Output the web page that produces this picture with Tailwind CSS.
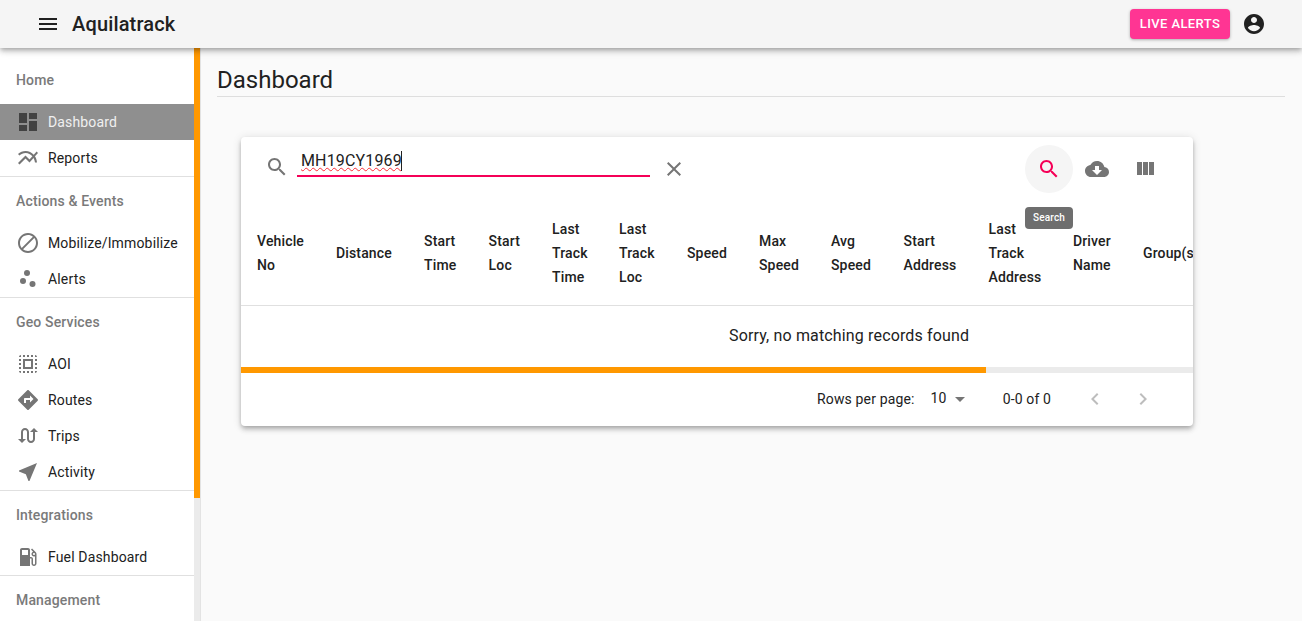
<!DOCTYPE html>
<html lang="en">
<head>
<meta charset="utf-8">
<title>Aquilatrack</title>
<script src="https://cdn.jsdelivr.net/npm/@tailwindcss/browser@4"></script>
</head>
<body class="h-[621px] w-[1302px] overflow-hidden bg-[#fafafa] font-['Roboto',sans-serif] tracking-[0.15px] text-[#212121]">
<header class="relative z-20 flex h-12 items-center bg-[#f5f5f5] pr-9 pl-6 shadow-[0_2px_4px_-1px_rgba(0,0,0,0.2),0_4px_5px_0_rgba(0,0,0,0.14),0_1px_10px_0_rgba(0,0,0,0.12)]">
  <svg class="ml-3 size-6 fill-[#212121]" viewBox="0 0 24 24"><path d="M3 18h18v-2H3v2zm0-5h18v-2H3v2zm0-7v2h18V6H3z"/></svg>
  <h1 class="ml-3 text-xl leading-8 font-medium">Aquilatrack</h1>
  <button class="mr-3 ml-auto h-[30px] w-[100px] rounded bg-[#ff3593] text-[13px] font-medium tracking-[0.4px] text-white uppercase shadow-[0_1px_3px_rgba(0,0,0,0.3)]">Live Alerts</button>
  <svg class="size-6 fill-[#212121]" viewBox="0 0 24 24"><path d="M12 2C6.48 2 2 6.48 2 12s4.48 10 10 10 10-4.48 10-10S17.52 2 12 2zm0 3c1.66 0 3 1.34 3 3s-1.34 3-3 3-3-1.34-3-3 1.34-3 3-3zm0 14.2c-2.5 0-4.71-1.28-6-3.22.03-1.99 4-3.08 6-3.08 1.99 0 5.97 1.09 6 3.08-1.29 1.94-3.5 3.22-6 3.22z"/></svg>
</header>
<div class="flex h-[573px]">
  <aside class="relative flex w-[201px] shrink-0 overflow-hidden border-r border-[#e3e3e3] bg-white">
    <nav class="w-[194px] shrink-0 pt-2 text-sm">
      <div class="flex h-12 items-center pl-4 font-medium text-[#7a7a7a]">Home</div>
      <a class="flex h-9 items-center bg-[#8f8f8f] pl-4 text-[#f0f0f0]"><svg class="mr-2 size-6 fill-[#424242]" viewBox="0 0 24 24"><path d="M3 13h8V3H3v10zm0 8h8v-6H3v6zm10 0h8V11h-8v10zm0-18v6h8V3h-8z"/></svg>Dashboard</a>
      <a class="flex h-9 items-center pl-4"><svg class="mr-2 size-6 fill-[#757575]" viewBox="0 0 24 24"><path d="M22 6.92l-1.41-1.41-2.85 3.21C15.68 6.4 12.83 5 9.61 5 6.72 5 4.07 6.16 2 8l1.42 1.42C5.12 7.93 7.27 7 9.61 7c2.74 0 5.09 1.26 6.77 3.24l-2.88 3.24-4-4L2 16.99l1.5 1.5 6-6.01 4 4 4.05-4.55c.75 1.35 1.25 2.9 1.44 4.55H21c-.22-2.3-.95-4.39-2.04-6.14L22 6.92z"/></svg>Reports</a>
      <div class="h-px bg-[#e0e0e0]"></div>
      <div class="flex h-12 items-center pl-4 font-medium text-[#7a7a7a]">Actions &amp; Events</div>
      <a class="flex h-9 items-center pl-4"><svg class="mr-2 size-6 fill-[#757575]" viewBox="0 0 24 24"><path d="M12 2C6.48 2 2 6.48 2 12s4.48 10 10 10 10-4.48 10-10S17.52 2 12 2zM4 12c0-4.42 3.58-8 8-8 1.85 0 3.55.63 4.9 1.69L5.69 16.9C4.63 15.55 4 13.85 4 12zm8 8c-1.85 0-3.55-.63-4.9-1.69L18.31 7.1C19.37 8.45 20 10.15 20 12c0 4.42-3.58 8-8 8z"/></svg>Mobilize/Immobilize</a>
      <a class="flex h-9 items-center pl-4"><svg class="mr-2 size-6 fill-[#757575]" viewBox="0 0 24 24"><circle cx="11" cy="6" r="3"/><circle cx="7" cy="14" r="3"/><circle cx="16.500" cy="17" r="3"/></svg>Alerts</a>
      <div class="h-px bg-[#e0e0e0]"></div>
      <div class="flex h-12 items-center pl-4 font-medium text-[#7a7a7a]">Geo Services</div>
      <a class="flex h-9 items-center pl-4"><svg class="mr-2 size-6 fill-[#757575]" viewBox="0 0 24 24"><path d="M3 5h2V3c-1.100 0-2 .9-2 2zm0 8h2v-2H3v2zm4 8h2v-2H7v2zM3 9h2V7H3v2zm10-6h-2v2h2V3zm6 0v2h2c0-1.100-.9-2-2-2zM5 21v-2H3c0 1.100.9 2 2 2zm-2-4h2v-2H3v2zM9 3H7v2h2V3zm2 18h2v-2h-2v2zm8-8h2v-2h-2v2zm0 8c1.100 0 2-.9 2-2h-2v2zm0-12h2V7h-2v2zm0 8h2v-2h-2v2zm-4 4h2v-2h-2v2zm0-16h2V3h-2v2zM7 17h10V7H7v10zm2-8h6v6H9V9z"/></svg>AOI</a>
      <a class="flex h-9 items-center pl-4"><svg class="mr-2 size-6 fill-[#757575]" viewBox="0 0 24 24"><path d="M21.710 11.290l-9-9c-.39-.39-1.020-.39-1.410 0l-9 9c-.39.39-.39 1.020 0 1.410l9 9c.39.39 1.020.39 1.410 0l9-9c.39-.38.39-1.010 0-1.410zM14 14.500V12h-4v3H8v-4c0-.55.45-1 1-1h5V7.500l3.500 3.500-3.500 3.500z"/></svg>Routes</a>
      <a class="flex h-9 items-center pl-4"><svg class="mr-2 size-6 fill-[#757575]" viewBox="0 0 24 24"><path d="M18 4l-4 4h3v7c0 1.100-.9 2-2 2s-2-.9-2-2V8c0-2.210-1.790-4-4-4S5 5.790 5 8v7H2l4 4 4-4H7V8c0-1.100.9-2 2-2s2 .9 2 2v7c0 2.210 1.790 4 4 4s4-1.790 4-4V8h3l-4-4z"/></svg>Trips</a>
      <a class="flex h-9 items-center pl-4"><svg class="mr-2 size-6 fill-[#757575]" viewBox="0 0 24 24"><path d="M21 3L3 10.530v.98l6.840 2.650L12.480 21h.98L21 3z"/></svg>Activity</a>
      <div class="h-px bg-[#e0e0e0]"></div>
      <div class="flex h-12 items-center pl-4 font-medium text-[#7a7a7a]">Integrations</div>
      <a class="flex h-9 items-center pl-4"><svg class="mr-2 size-6 fill-[#757575]" viewBox="0 0 24 24"><path d="M19.770 7.230l.01-.01-3.720-3.720L15 4.560l2.110 2.110c-.94.36-1.610 1.260-1.610 2.330 0 1.380 1.120 2.500 2.500 2.500.36 0 .69-.08 1-.21v7.210c0 .55-.45 1-1 1s-1-.45-1-1V14c0-1.100-.9-2-2-2h-1V5c0-1.100-.9-2-2-2H6c-1.100 0-2 .9-2 2v16h10v-7.500h1.500v5c0 1.380 1.120 2.500 2.500 2.500s2.500-1.120 2.500-2.500V9c0-.69-.28-1.320-.73-1.770zM12 10H6V5h6v5zm6 0c-.55 0-1-.45-1-1s.45-1 1-1 1 .45 1 1-.45 1-1 1z"/></svg>Fuel Dashboard</a>
      <div class="h-px bg-[#e0e0e0]"></div>
      <div class="flex h-12 items-center pl-4 font-medium text-[#7a7a7a]">Management</div>
    </nav>
    <div class="h-full w-1.5 shrink-0 bg-[#ebebeb]"><div class="h-[450px] bg-[#ff9800]"></div></div>
  </aside>
  <main class="min-w-0 flex-1 pt-4 pr-[17px] pl-4">
    <h2 class="h-[33px] border-b border-[#dedede] text-2xl leading-8 tracking-normal">Dashboard</h2>
    <section class="relative mt-10 ml-6 w-[952px] overflow-hidden rounded bg-white shadow-[0_2px_4px_-1px_rgba(0,0,0,0.2),0_4px_5px_0_rgba(0,0,0,0.14),0_1px_10px_0_rgba(0,0,0,0.12)]">
      <div class="flex h-16 items-center pr-6 pl-6">
        <svg class="size-6 -translate-y-[2px] fill-[#757575]" viewBox="0 0 24 24"><path d="M15.500 14h-.79l-.28-.27C15.410 12.590 16 11.110 16 9.500 16 5.910 13.090 3 9.500 3S3 5.910 3 9.500 5.910 16 9.500 16c1.610 0 3.090-.59 4.230-1.570l.27.28v.79l5 4.990L20.490 19l-4.990-5zm-6 0C7.010 14 5 11.990 5 9.500S7.010 5 9.500 5 14 7.010 14 9.500 11.990 14 9.500 14z"/></svg>
        <div class="ml-2 flex h-8 w-[353px] -translate-y-[8px] items-center border-b-2 border-[#f50057] pl-1 text-base"><span class="translate-y-px underline decoration-red-500 decoration-wavy decoration-1">MH19CY1969</span><span class="-ml-px h-5 w-px translate-y-px bg-[#212121]"></span></div>
        <svg class="ml-3 size-6 fill-[#757575]" viewBox="0 0 24 24"><path d="M19 6.410L17.590 5 12 10.590 6.410 5 5 6.410 10.590 12 5 17.590 6.410 19 12 13.410 17.590 19 19 17.590 13.410 12z"/></svg>
        <div class="ml-auto flex">
          <span class="flex size-12 items-center justify-center rounded-full bg-[#f5f5f5]"><svg class="size-6 fill-[#f50057]" viewBox="0 0 24 24"><path d="M15.500 14h-.79l-.28-.27C15.410 12.590 16 11.110 16 9.500 16 5.910 13.090 3 9.500 3S3 5.910 3 9.500 5.910 16 9.500 16c1.610 0 3.090-.59 4.230-1.570l.27.28v.79l5 4.990L20.490 19l-4.990-5zm-6 0C7.010 14 5 11.990 5 9.500S7.010 5 9.500 5 14 7.010 14 9.500 11.990 14 9.500 14z"/></svg></span>
          <span class="flex size-12 items-center justify-center"><svg class="size-6 fill-[#757575]" viewBox="0 0 24 24"><path d="M19.350 10.040C18.670 6.590 15.640 4 12 4 9.110 4 6.600 5.640 5.350 8.040 2.340 8.360 0 10.910 0 14c0 3.310 2.690 6 6 6h13c2.760 0 5-2.240 5-5 0-2.640-2.050-4.780-4.650-4.960zM17 13l-5 5-5-5h3V9h4v4h3z"/></svg></span>
          <span class="flex size-12 items-center justify-center"><svg class="size-6 fill-[#757575]" viewBox="0 0 24 24"><path d="M10 18h5V5h-5v13zm-6 0h5V5H4v13zM16 5v13h5V5h-5z"/></svg></span>
        </div>
      </div>
      <div class="grid h-[105px] grid-cols-[79px_88px_64.6px_63.4px_67px_68px_72px_72px_72.6px_85px_84.4px_70px_60px] items-center border-b border-[#e0e0e0] pl-4 text-sm leading-6 font-medium whitespace-nowrap">
        <div>Vehicle<br>No</div>
        <div>Distance</div>
        <div>Start<br>Time</div>
        <div>Start<br>Loc</div>
        <div>Last<br>Track<br>Time</div>
        <div>Last<br>Track<br>Loc</div>
        <div>Speed</div>
        <div>Max<br>Speed</div>
        <div>Avg<br>Speed</div>
        <div>Start<br>Address</div>
        <div>Last<br>Track<br>Address</div>
        <div>Driver<br>Name</div>
        <div>Group(s)</div>
      </div>
      <div class="flex h-[61px] items-center pb-[2px] pl-[488px] text-base">Sorry, no matching records found</div>
      <div class="h-1.5 bg-[#ebebeb]"><div class="h-full w-[745px] bg-[#ff9800]"></div></div>
      <div class="flex h-[53px] items-center pb-[2px] text-sm">
        <span class="ml-[576px]">Rows per page:</span>
        <span class="ml-4 -translate-y-px">10</span>
        <svg class="ml-[1px] size-6 fill-[#757575]" viewBox="0 0 24 24"><path d="M7 10l5 5 5-5z"/></svg>
        <span class="ml-[31px]">0-0 of 0</span>
        <svg class="ml-8 size-6 fill-[#bdbdbd]" viewBox="0 0 24 24"><path d="M15.410 7.410L14 6l-6 6 6 6 1.410-1.410L10.830 12z"/></svg>
        <svg class="ml-6 size-6 fill-[#bdbdbd]" viewBox="0 0 24 24"><path d="M10 6L8.590 7.410 13.170 12l-4.580 4.580L10 18l6-6z"/></svg>
      </div>
      <div class="absolute top-[70px] left-[784px] flex h-[22px] w-12 items-center justify-center rounded bg-[#6e6e6e] pb-px text-[10px] font-medium text-white">Search</div>
    </section>
  </main>
</div>
</body>
</html>
